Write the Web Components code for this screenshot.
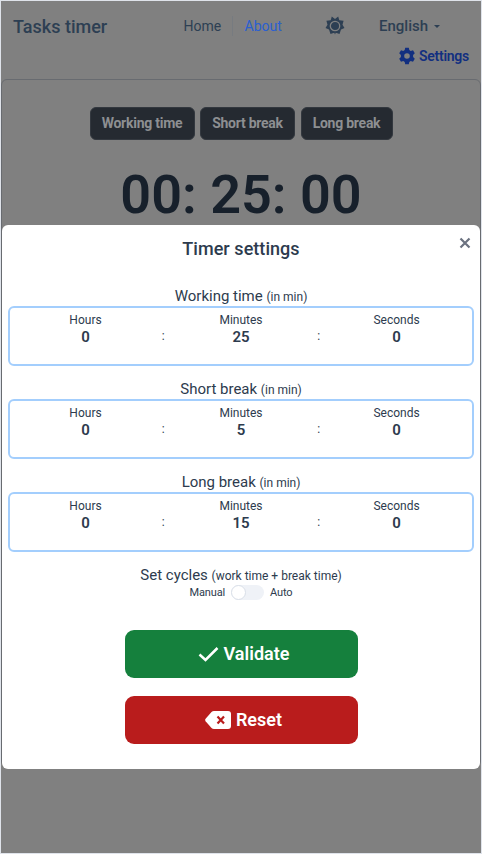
<!DOCTYPE html>
<html lang="en">
<head>
<meta charset="utf-8">
<title>Tasks timer</title>
<style>
html,body{margin:0;height:100%}
body{font-family:Roboto,"Liberation Sans",sans-serif;color:#2d3b4e;background:#dfe3ea;overflow:hidden}
</style>
</head>
<body>
<timer-app></timer-app>
<script>
const define=(name,html)=>{
  const t=document.createElement('template');t.innerHTML=html;
  customElements.define(name,class extends HTMLElement{
    constructor(){super();this.attachShadow({mode:'open'}).append(t.content.cloneNode(true));}
  });
};
define('app-header',`<style>
:host{display:block;height:78px;color:#2d3f53;box-sizing:border-box}
.row{display:flex;align-items:center;height:50px;padding-left:12px;white-space:nowrap}
.title{font-size:18px;font-weight:500;width:170.500px}
nav{display:flex;align-items:center;font-size:14px}
nav span{width:48px}
nav i{width:1px;height:20px;background:#777b80;margin-right:12px}
nav b{font-weight:400;color:#2a5fd0;width:80.500px}
svg{display:block}
.lang{display:flex;align-items:center;margin-left:34px;font-size:15px;font-weight:500;gap:6px}
.caret{border:3px solid transparent;border-top-color:#2d3f53;border-bottom:0}
.set{display:flex;justify-content:flex-end;align-items:center;gap:4px;color:#122f80;font-size:14px;font-weight:600;letter-spacing:-.25px;padding-right:12px;height:18px;margin-top:-4px}
</style>
<div class="row"><span class="title">Tasks timer</span><nav><span>Home</span><i></i><b>About</b></nav>
<svg width="20" height="20" viewBox="0 0 20 20"><path fill="#2d3f53" d="M10 3 13.200.6 14.300 4.300 18.600 4.700 17.500 8.800 19.500 12 16 13.500 14.500 18 10.800 16.800 10 18.500 9.200 16.800 5.500 18 4 13.500.5 12 2.500 8.800 1.400 4.700 5.700 4.300 6.800.6Z"/><circle cx="10" cy="10" r="4.700" fill="#2d3f53" stroke="#808080" stroke-width="1.300"/></svg>
<span class="lang">English<span class="caret"></span></span></div>
<div class="set"><svg width="16" height="18" viewBox="0 0 16 18"><path fill="#122f80" fill-rule="evenodd" d="M6.200.8h3.600l.5 2.300 1.400.8 2.300-.7L15.800 6.300 14.100 8v2l1.700 1.700-1.800 3.100-2.300-.7-1.400.8-.5 2.300H6.200l-.5-2.300-1.400-.8-2.300.7-1.800-3.100L1.900 10V8L.2 6.300 2 3.200l2.300.7 1.400-.8ZM8 6.200a2.800 2.800 0 1 0 0 5.600 2.800 2.800 0 0 0 0-5.600Z"/></svg><span>Settings</span></div>`);
define('tab-button',`<style>
:host{display:flex;align-items:center;justify-content:center;height:33px;box-sizing:border-box;background:#252a31;border:1px solid #33383f;border-radius:6px;color:#8d8f92;font-size:14px;font-weight:700;letter-spacing:-.25px;padding-bottom:1px;white-space:nowrap}
</style><slot></slot>`);
define('timer-panel',`<style>
:host{display:block;height:688px;border:1px solid #686b70;border-radius:6px;padding-top:27px;box-sizing:border-box}
.tabs{display:grid;grid-template-columns:105px 95px 92px;gap:5.500px;justify-content:center}
.clock{font-size:54px;font-weight:600;line-height:60px;text-align:center;color:#17202b;margin-top:25px;white-space:nowrap}
</style><div class="tabs"><tab-button>Working time</tab-button><tab-button>Short break</tab-button><tab-button>Long break</tab-button></div>
<div class="clock">00: 25: 00</div>`);
define('time-field',`<style>
:host{display:block;height:93px;text-align:center}
.l{font-size:15px;line-height:20px;height:20px;white-space:nowrap}
.l ::slotted(small){font-size:12px}
.box{display:grid;grid-template-columns:155.500px 0 155.500px 0 155.500px;justify-content:center;height:60px;box-sizing:border-box;border:2px solid #a3cefd;border-radius:6px;padding-top:4px;font-size:12px;line-height:16px}
.sep{display:flex;justify-content:center;padding-top:16px}
b{display:block;font-size:15px;line-height:18px;font-weight:600}
</style><div class="l"><slot></slot></div>
<div class="box"><div>Hours<b><slot name="h">0</slot></b></div><span class="sep">:</span><div>Minutes<b><slot name="m"></slot></b></div><span class="sep">:</span><div>Seconds<b><slot name="s">0</slot></b></div></div>`);
define('action-button',`<style>
:host{display:flex;align-items:center;justify-content:center;gap:5px;width:233px;height:48px;box-sizing:border-box;padding:0 0 1px 5px;margin:0 auto;border-radius:9px;background:var(--fill);color:#fff;font-size:18px;font-weight:600}
</style><slot name="icon"></slot><slot></slot>`);
define('mode-switch',`<style>
:host{display:flex;justify-content:center;align-items:center;font-size:11px;letter-spacing:-.15px;height:16px;line-height:16px;gap:6px}
i{display:block;width:33px;height:15px;margin-bottom:1px;border-radius:8px;background:#eff2f7}
i::before{content:"";display:block;box-sizing:border-box;width:15px;height:15px;border:1px solid #d9dfe8;border-radius:50%;background:#fff}
</style><span>Manual</span><i></i><span>Auto</span>`);
define('settings-modal',`<style>
:host{display:block;position:absolute;height:544px;box-sizing:border-box;background:#fff;border-radius:6px;padding:0 6px;color:#2d3b4e}
.x{position:absolute;right:9px;top:12px}
h1{font-size:18px;font-weight:500;letter-spacing:.05px;line-height:24px;margin:0;padding-top:12px;height:49px;text-align:center}
.cyc{font-size:15px;line-height:20px;height:20px;text-align:center}.cyc small{font-size:12px}
.go{margin-top:29px}.re{margin-top:18px}
svg{display:block}
</style><svg class="x" width="12" height="12" viewBox="0 0 12 12"><path d="M1.500 1.500 10.500 10.500M10.500 1.500 1.500 10.500" stroke="#6b7280" stroke-width="2.200"/></svg>
<h1>Timer settings</h1>
<time-field>Working time <small>(in min)</small><span slot="m">25</span></time-field>
<time-field>Short break <small>(in min)</small><span slot="m">5</span></time-field>
<time-field>Long break <small>(in min)</small><span slot="m">15</span></time-field>
<div class="cyc">Set cycles <small>(work time + break time)</small></div>
<mode-switch></mode-switch>
<action-button class="go" style="--fill:#15803d"><svg slot="icon" width="21" height="16" viewBox="0 0 21 16"><path d="M1.500 8.500 7.500 14 19.500 2" fill="none" stroke="#fff" stroke-width="2.500"/></svg>Validate</action-button>
<action-button class="re" style="--fill:#b91c1c"><svg slot="icon" width="26" height="18" viewBox="0 0 26 18"><path fill="#fff" d="M9 0h14a3 3 0 0 1 3 3v12a3 3 0 0 1-3 3H9Q7.500 18 6.500 17L.6 10.200Q-.3 9 .6 7.800L6.500 1Q7.500 0 9 0Z"/><path d="m12.500 5.500 6.500 7m0-7-6.500 7" stroke="#b91c1c" stroke-width="2.200"/></svg>Reset</action-button>`);
define('timer-app',`<style>
:host{display:flex;flex-direction:column;position:relative;width:482px;height:854px;box-sizing:border-box;border:1px solid #dfe3ea;background:#808080}
settings-modal{left:1px;right:1px;top:224px}
</style><app-header></app-header><timer-panel></timer-panel><settings-modal></settings-modal>`);
</script>
</body>
</html>
